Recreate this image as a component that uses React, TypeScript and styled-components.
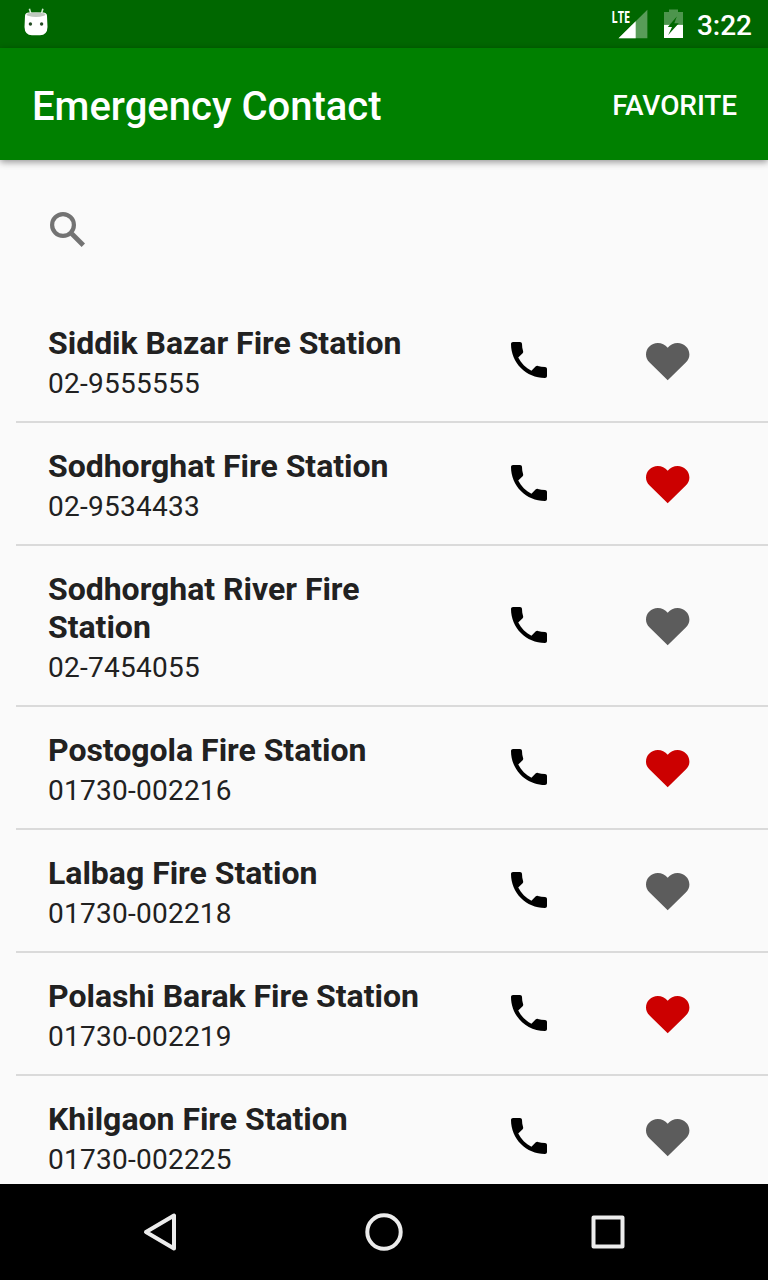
import React from "react";
import styled, { createGlobalStyle } from "styled-components";

const GlobalStyle = createGlobalStyle`
  * { box-sizing: border-box; }
  body { margin: 0; background: #fafafa; font-family: Roboto, "Liberation Sans", sans-serif; }
`;

const Screen = styled.div`
  width: 768px;
  height: 1280px;
  display: flex;
  flex-direction: column;
  overflow: hidden;
  background: #fafafa;
`;

const StatusBar = styled.header`
  flex: none;
  height: 48px;
  padding: 0 16px 0 20px;
  display: flex;
  align-items: center;
  background: #006700;
  color: #fff;
`;

const StatusIcons = styled.div`
  margin-left: auto;
  display: flex;
  align-items: center;
`;

const SignalGroup = styled.div`
  display: flex;
  gap: 16px;
`;

const Clock = styled.span`
  margin-left: 13px;
  font-size: 28px;
  font-weight: 500;
  line-height: 33px;
  padding-top: 2px;
`;

const AppBar = styled.div`
  flex: none;
  height: 112px;
  padding: 4px 31px 0 32px;
  display: flex;
  align-items: center;
  justify-content: space-between;
  background: #008000;
  color: #fff;
  box-shadow: 0 2px 7px rgba(0, 0, 0, 0.42);
`;

const Title = styled.h1`
  margin: 0;
  padding-top: 2px;
  font-size: 40px;
  font-weight: 500;
  line-height: 48px;
`;

const Action = styled.button`
  padding: 0;
  border: 0;
  background: none;
  color: inherit;
  font: 500 28px/34px Roboto, "Liberation Sans", sans-serif;
  letter-spacing: -0.1px;
`;

const SearchBar = styled.div`
  flex: none;
  height: 140px;
  padding-left: 44px;
  display: flex;
  align-items: center;
`;

const List = styled.ul`
  flex: 1;
  min-height: 0;
  overflow: hidden;
  margin: 0;
  padding: 0 0 0 16px;
  list-style: none;
`;

const Row = styled.li`
  padding: 24px 0 21px 32px;
  display: flex;
  align-items: center;
  border-bottom: 2px solid #dadada;
`;

const Info = styled.div`
  width: 390px;
  margin-right: 67px;
  color: #212121;
`;

const Name = styled.div`
  font-size: 32px;
  font-weight: 700;
  line-height: 38px;
  letter-spacing: -0.02px;
`;

const Phone = styled.div`
  margin-top: 5px;
  font-size: 28px;
  line-height: 33px;
  letter-spacing: 0.25px;
`;

const IconButton = styled.button<{ $color: string; $gap?: number; $lift?: number }>`
  display: flex;
  padding: 0;
  border: 0;
  background: none;
  margin-left: ${({ $gap }) => $gap ?? 0}px;
  margin-bottom: ${({ $lift }) => $lift ?? 0}px;
  color: ${({ $color }) => $color};
`;

const NavBar = styled.nav`
  flex: none;
  height: 96px;
  padding: 0 48px;
  display: grid;
  grid-template-columns: repeat(3, 1fr);
  place-items: center;
  background: #000;
`;

const contacts = [
  { name: "Siddik Bazar Fire Station", phone: "02-9555555", favorite: false },
  { name: "Sodhorghat Fire Station", phone: "02-9534433", favorite: true },
  { name: "Sodhorghat River Fire Station", phone: "02-7454055", favorite: false },
  { name: "Postogola Fire Station", phone: "01730-002216", favorite: true },
  { name: "Lalbag Fire Station", phone: "01730-002218", favorite: false },
  { name: "Polashi Barak Fire Station", phone: "01730-002219", favorite: true },
  { name: "Khilgaon Fire Station", phone: "01730-002225", favorite: false },
];

const RobotIcon = () => (
  <svg width="32" height="48" viewBox="0 0 32 48">
    <path d="M9.4 8.8l1.5 5M22.9 8.8l-1.5 5" stroke="#cdeacd" strokeWidth="1.6" />
    <path d="M5 16Q5 12.5 9 12.5H23Q27 12.5 27 16L27.5 27Q27.3 35 20 35.3H12Q4.7 35 4.5 27Z" fill="#fff" />
    <path d="M8 13.2Q16 11.8 24 13.2Q27 14.5 24 15.8Q16 18.2 8 15.8Q5 14.5 8 13.2Z" fill="#bfc9bf" />
    <circle cx="10.4" cy="24" r="1.7" fill="#234b23" />
    <circle cx="21.6" cy="24" r="1.7" fill="#234b23" />
  </svg>
);

const LteText = styled.text`
  font: 700 16.5px "Open Sans", Roboto, sans-serif;
`;

const SignalIcon = () => (
  <svg width="38" height="48" viewBox="0 0 38 48" fill="#fff">
    <path d="M37.4 9.7V38.3H8.5Z" opacity=".35" />
    <path d="M25.7 21.3V38.3H8.5Z" />
    <LteText x="1.6" y="22.8" textLength="18.6" lengthAdjust="spacingAndGlyphs">LTE</LteText>
  </svg>
);

const BatteryIcon = () => (
  <svg width="20" height="48" viewBox="0 0 20 48">
    <path d="M5 9.5H14V12H19V24.8H0V12H5Z" fill="#4d954d" />
    <path d="M0 24.8H19V38H0Z" fill="#fff" />
    <path d="M12.8 16.5L3.8 27H8L4.2 35L14.8 23.2H10.3Z" fill="#006700" />
  </svg>
);

const SearchIcon = () => (
  <svg width="48" height="48" viewBox="0 0 48 48" fill="none" stroke="#737373">
    <circle cx="19" cy="19" r="10.9" strokeWidth="4.2" />
    <path d="M27.8 27.8L39.3 39.3" strokeWidth="4.8" />
  </svg>
);

const CallIcon = () => (
  <svg width="48" height="48" viewBox="0 0 24 24" fill="currentColor">
    <path d="M6.62 10.79c1.44 2.83 3.76 5.14 6.59 6.59l2.2-2.2c.27-.27.67-.36 1.02-.24 1.12.37 2.33.57 3.57.57.55 0 1 .45 1 1V20c0 .55-.45 1-1 1-9.39 0-17-7.61-17-17 0-.55.45-1 1-1h3.5c.55 0 1 .45 1 1 0 1.25.2 2.45.57 3.57.11.35.03.74-.25 1.02l-2.2 2.2z" />
  </svg>
);

const HeartIcon = () => (
  <svg width="44" height="38" viewBox="0 0 44 38" fill="currentColor">
    <path d="M21.7 4.8C24.2 1.7 27.8 0 31.6 0C38.2 0 43.4 5.2 43.4 11.6C43.4 14.8 42.2 17.2 39.8 19.6L21.7 37.2L3.6 19.6C1.2 17.2 0 14.8 0 11.6C0 5.2 5.2 0 11.8 0C15.6 0 19.2 1.7 21.7 4.8Z" />
  </svg>
);

const BackIcon = () => (
  <svg width="48" height="48" viewBox="0 0 48 48" fill="none" stroke="#ececec" strokeWidth="4" strokeLinejoin="round">
    <path d="M10 24L38 7.5V40.5Z" />
  </svg>
);

const HomeIcon = () => (
  <svg width="48" height="48" viewBox="0 0 48 48" fill="none" stroke="#ececec" strokeWidth="4">
    <circle cx="24" cy="24" r="16.7" />
  </svg>
);

const RecentsIcon = () => (
  <svg width="48" height="48" viewBox="0 0 48 48" fill="none" stroke="#ececec" strokeWidth="4" strokeLinejoin="round">
    <path d="M9.5 9.5H38.5V38.5H9.5Z" />
  </svg>
);

export default function App() {
  return (
    <Screen>
      <GlobalStyle />
      <StatusBar>
        <RobotIcon />
        <StatusIcons>
          <SignalGroup>
            <SignalIcon />
            <BatteryIcon />
          </SignalGroup>
          <Clock>3:22</Clock>
        </StatusIcons>
      </StatusBar>
      <AppBar>
        <Title>Emergency Contact</Title>
        <Action>FAVORITE</Action>
      </AppBar>
      <SearchBar>
        <SearchIcon />
      </SearchBar>
      <List>
        {contacts.map((c) => (
          <Row key={c.name}>
            <Info>
              <Name>{c.name}</Name>
              <Phone>{c.phone}</Phone>
            </Info>
            <IconButton $color="#000" $lift={4} aria-label="Call">
              <CallIcon />
            </IconButton>
            <IconButton $color={c.favorite ? "#cc0000" : "#5c5c5c"} $gap={93} $lift={1} aria-label="Favorite">
              <HeartIcon />
            </IconButton>
          </Row>
        ))}
      </List>
      <NavBar>
        <BackIcon />
        <HomeIcon />
        <RecentsIcon />
      </NavBar>
    </Screen>
  );
}
